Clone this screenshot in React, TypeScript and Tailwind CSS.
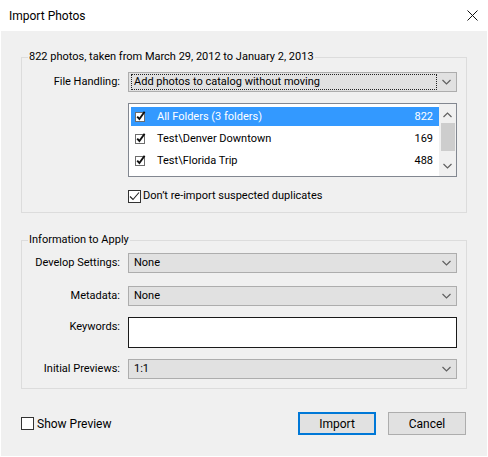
import React from 'react'

const font = { fontFamily: 'Roboto, "Noto Sans", sans-serif' }

const Chevron = ({ up = false }: { up?: boolean }) => (
  <svg width="9" height="6" viewBox="0 0 9 6" className={up ? 'rotate-180' : ''}>
    <path d="M0.5 1 L4.5 5 L8.5 1" fill="none" stroke="#606060" strokeWidth="1.2" />
  </svg>
)

const ListCheck = () => (
  <svg width="13" height="13" viewBox="0 0 13 13">
    <rect x="1.5" y="2.5" width="9" height="9" fill="#fff" stroke="#6d6d6d" />
    <path d="M3.2 6.6 L5.4 9 L10.6 1.8" fill="none" stroke="#111" strokeWidth="1.9" />
  </svg>
)

const CheckBox = ({ checked }: { checked?: boolean }) => (
  <span className="flex h-[13px] w-[13px] items-center justify-center border border-[#333] bg-white">
    {checked && (
      <svg width="11" height="11" viewBox="0 0 11 11">
        <path d="M1 5.5 L4 8.5 L10 1.5" fill="none" stroke="#222" strokeWidth="1.1" />
      </svg>
    )}
  </span>
)

const Select = ({ value, focused = false }: { value: string; focused?: boolean }) => (
  <div className="flex h-[20px] flex-1 items-center border border-[#adadad] bg-[#e1e1e1]">
    <div
      className={`ml-[2px] flex h-[16px] flex-1 items-center pl-[2px] ${
        focused ? 'border border-dotted border-[#222]' : 'border border-transparent'
      }`}
    >
      {value}
    </div>
    <div className="flex w-[19px] items-center justify-center">
      <Chevron />
    </div>
  </div>
)

const Row = ({ label, children, className = '' }: { label: string; children: React.ReactNode; className?: string }) => (
  <div className={`flex items-center pr-[9px] ${className}`}>
    <div className="w-[99px] pr-[1px] text-right">{label}</div>
    <div className="ml-[7px] flex flex-1">{children}</div>
  </div>
)

const folders = [
  { name: 'All Folders (3 folders)', count: 822, selected: true },
  { name: 'Test\\Denver Downtown', count: 169 },
  { name: 'Test\\Florida Trip', count: 488 },
]

export default function App() {
  return (
    <div className="flex h-[457px] w-[488px] flex-col bg-white text-[11px] leading-[16px] text-black" style={font}>
      <div className="flex h-[31px] items-center justify-between pl-[9px] pr-[10px]">
        <span className="text-[12px]">Import Photos</span>
        <svg width="11" height="11" viewBox="0 0 11 11">
          <path d="M0.5 0.5 L10.5 10.5 M10.5 0.5 L0.5 10.5" stroke="#111" strokeWidth="1" />
        </svg>
      </div>

      <div className="mx-[1px] mb-[1px] flex flex-1 flex-col bg-[#f0f0f0] px-[20px]">
        <fieldset className="mt-[18px] border border-[#dcdcdc] pb-[8px]">
          <legend className="ml-[6px] px-[1px]">822 photos, taken from March 29, 2012 to January 2, 2013</legend>
          <Row label="File Handling:" className="mt-[7px]">
            <Select value="Add photos to catalog without moving" focused />
          </Row>
          <Row label="" className="mt-[11px]">
            <div className="flex h-[74px] flex-1 border border-[#828790] bg-white">
              <div className="flex-1 pl-[2px] pt-[3px]">
                {folders.map((f) => (
                  <div key={f.name} className="h-[22px]">
                    <div
                      className={`flex h-[19px] items-center pr-[6px] ${
                        f.selected ? 'bg-[#3399ff] text-white' : ''
                      }`}
                    >
                      <div className="ml-[3px] w-[23px]">
                        <ListCheck />
                      </div>
                      <span className="flex-1">{f.name}</span>
                      <span>{f.count}</span>
                    </div>
                  </div>
                ))}
              </div>
              <div className="flex w-[17px] flex-col items-center bg-[#f0f0f0]">
                <div className="flex h-[17px] items-center justify-center pt-[4px]">
                  <Chevron up />
                </div>
                <div className="mt-[2px] h-[28px] w-[14px] bg-[#cdcdcd]" />
                <div className="flex-1" />
                <div className="flex h-[17px] items-center justify-center pb-[4px]">
                  <Chevron />
                </div>
              </div>
            </div>
          </Row>
          <div className="ml-[106px] mt-[11px] flex items-center gap-[2px]">
            <CheckBox checked />
            <span>Don’t re-import suspected duplicates</span>
          </div>
        </fieldset>

        <fieldset className="mt-[19px] border border-[#dcdcdc] pb-[9px]">
          <legend className="ml-[6px] px-[1px]">Information to Apply</legend>
          <Row label="Develop Settings:" className="mt-[5px]">
            <Select value="None" />
          </Row>
          <Row label="Metadata:" className="mt-[13px]">
            <Select value="None" />
          </Row>
          <div className="mt-[11px] flex items-start pr-[9px]">
            <div className="mt-[2px] w-[99px] pr-[1px] text-right">Keywords:</div>
            <div className="ml-[7px] h-[31px] flex-1 border border-[#1a1a1a] bg-white" />
          </div>
          <Row label="Initial Previews:" className="mt-[11px]">
            <Select value="1:1" />
          </Row>
        </fieldset>

        <div className="mr-[1px] mt-[23px] flex items-center">
          <CheckBox />
          <span className="ml-[3px] flex-1 text-[12px]">Show Preview</span>
          <button className="h-[23px] w-[78px] border-2 border-[#0078d7] bg-[#e1e1e1] text-[12px]">Import</button>
          <button className="ml-[12px] h-[23px] w-[78px] border border-[#adadad] bg-[#e1e1e1] text-[12px]">
            Cancel
          </button>
        </div>
      </div>
    </div>
  )
}
